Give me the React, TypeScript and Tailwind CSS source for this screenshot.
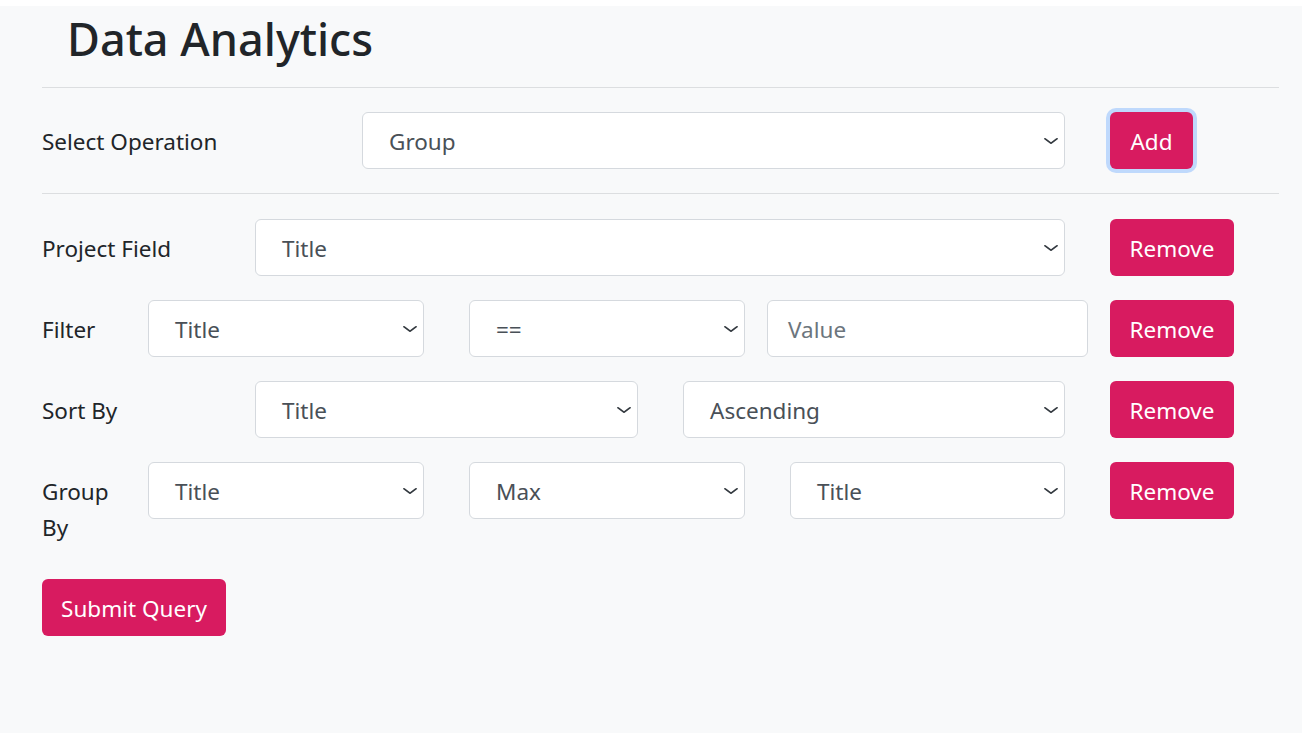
import React from "react";

const font = { fontFamily: '"Noto Sans", "Open Sans", sans-serif' };

function Chevron() {
  return (
    <svg
      className="pointer-events-none absolute right-[6px] top-1/2 -translate-y-1/2"
      width="16"
      height="12"
      viewBox="0 0 16 16"
      fill="none"
      stroke="#343a40"
      strokeWidth="2"
      strokeLinecap="round"
      strokeLinejoin="round"
      preserveAspectRatio="none"
    >
      <path d="m2 5 6 6 6-6" />
    </svg>
  );
}

function Select({ value, w }: { value: string; w: string }) {
  return (
    <div className={`relative h-[57px] shrink-0 ${w}`}>
      <div className="flex h-full w-full items-center rounded-[6px] border border-[#d5d9de] bg-white pl-[26px] pt-[2px] text-[22.5px] text-[#495057]">
        {value}
      </div>
      <Chevron />
    </div>
  );
}

function Btn({ label, w, focus }: { label: string; w: string; focus?: boolean }) {
  return (
    <button
      className={`h-[57px] shrink-0 rounded-[6px] bg-[#d81b60] pt-[2px] text-[22.5px] text-white ${w} ${
        focus ? "ring-[4px] ring-[#bfd9fc]" : ""
      }`}
    >
      {label}
    </button>
  );
}

export default function App() {
  return (
    <div className="min-h-[734px] w-[1303px] bg-white pt-[6px]" style={font}>
      <div className="h-[727px] w-[1302px] bg-[#f8f9fa] text-[#212529]">
        <div className="pl-[42px] pr-[24px]">
          <h1 className="pl-[25px] pt-[5px] text-[45px] font-medium leading-[56px] text-[#212529]">
            Data Analytics
          </h1>
          <div className="mt-[20px] h-px w-[1237px] bg-[#dcdee0]" />

          <div className="flex h-[105px] items-center">
            <div className="w-[320px] pt-[3px] text-[22.5px]">Select Operation</div>
            <Select value="Group" w="w-[703px]" />
            <div className="ml-[45px]">
              <Btn label="Add" w="w-[83px]" focus />
            </div>
          </div>
          <div className="h-px w-[1237px] bg-[#dcdee0]" />

          <div className="mt-[25px] flex flex-col gap-[24px]">
            <div className="flex items-start">
              <div className="flex h-[57px] w-[213px] items-center pt-[2px] text-[22.5px]">Project Field</div>
              <Select value="Title" w="w-[810px]" />
              <div className="ml-[45px]">
                <Btn label="Remove" w="w-[124px]" />
              </div>
            </div>

            <div className="flex items-start">
              <div className="flex h-[57px] w-[106px] items-center pt-[2px] text-[22.5px]">Filter</div>
              <Select value="Title" w="w-[276px]" />
              <div className="ml-[45px]">
                <Select value="==" w="w-[276px]" />
              </div>
              <div className="ml-[22px] flex h-[57px] w-[321px] items-center rounded-[6px] border border-[#d5d9de] bg-white pl-[20px] pt-[2px] text-[22.5px] text-[#6c757d]">
                Value
              </div>
              <div className="ml-[22px]">
                <Btn label="Remove" w="w-[124px]" />
              </div>
            </div>

            <div className="flex items-start">
              <div className="flex h-[57px] w-[213px] items-center pt-[2px] text-[22.5px]">Sort By</div>
              <Select value="Title" w="w-[383px]" />
              <div className="ml-[45px]">
                <Select value="Ascending" w="w-[382px]" />
              </div>
              <div className="ml-[45px]">
                <Btn label="Remove" w="w-[124px]" />
              </div>
            </div>

            <div className="flex items-start">
              <div className="w-[106px] pt-[12px] text-[22.5px] leading-[36px]">
                Group
                <br />
                By
              </div>
              <Select value="Title" w="w-[276px]" />
              <div className="ml-[45px]">
                <Select value="Max" w="w-[276px]" />
              </div>
              <div className="ml-[45px]">
                <Select value="Title" w="w-[275px]" />
              </div>
              <div className="ml-[45px]">
                <Btn label="Remove" w="w-[124px]" />
              </div>
            </div>
          </div>

          <div className="mt-[33px]">
            <Btn label="Submit Query" w="w-[184px]" />
          </div>
        </div>
      </div>
    </div>
  );
}
